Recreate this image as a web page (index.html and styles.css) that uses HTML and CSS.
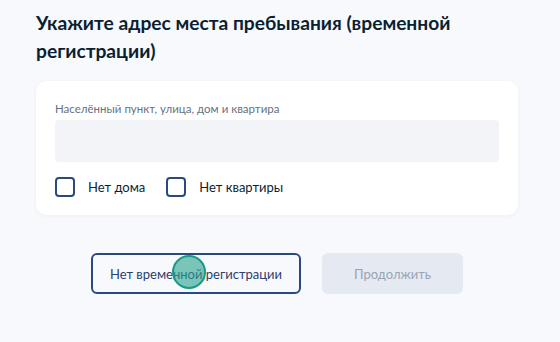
FILE: index.html
```html
<!DOCTYPE html>
<html lang="ru">
<head>
  <meta charset="UTF-8" />
  <meta name="viewport" content="width=device-width, initial-scale=1.0" />
  <title>Адрес места пребывания</title>
  <link rel="stylesheet" href="styles.css">
</head>
<body>
  <div class="page">
    <h2 class="title">Укажите адрес места пребывания (временной регистрации)</h2>

    <div class="card">
      <label class="field-label" for="address">Населённый пункт, улица, дом и квартира</label>
      <input type="text" id="address" class="field-input" />

      <div class="checks">
        <label class="check"><span class="box"></span> Нет дома</label>
        <label class="check"><span class="box"></span> Нет квартиры</label>
      </div>
    </div>

    <div class="actions">
      <button class="btn btn-outline">Нет временной регистрации
        <span class="touch"></span>
      </button>
      <button class="btn btn-disabled" disabled>Продолжить</button>
    </div>
  </div>
</body>
</html>
```

FILE: styles.css
```css
:root {
  --bg: #f8f9fc;
  --text: #0b1f33;
  --muted: #66727f;
  --navy: #2a4a7f;
  --field: #f2f4f8;
}

body {
  margin: 0;
  background: var(--bg);
  font-family: Lato, "Open Sans", sans-serif;
  color: var(--text);
}

.page {
  width: 482px;
  padding: 9px 0 0 36px;
}

.title {
  margin: 0 0 16px;
  font-size: 19.2px;
  line-height: 28px;
  font-weight: 700;
  width: 440px;
}

.card {
  background: #fff;
  border-radius: 10px;
  padding: 20px 19px 18px;
  box-shadow: 0 1px 4px rgba(11, 31, 51, 0.05);
}

.field-label {
  display: block;
  font-size: 11.5px;
  line-height: 16px;
  color: var(--muted);
  margin-bottom: 3px;
}

.field-input {
  display: block;
  width: 100%;
  box-sizing: border-box;
  height: 42px;
  border: none;
  border-radius: 4px;
  background: var(--field);
}

.checks {
  display: flex;
  gap: 21px;
  margin-top: 15px;
}

.check {
  display: flex;
  align-items: center;
  gap: 13px;
  font-size: 13px;
  line-height: 20px;
}

.box {
  width: 20px;
  height: 20px;
  box-sizing: border-box;
  border: 2px solid var(--navy);
  border-radius: 4px;
}

.actions {
  display: flex;
  justify-content: center;
  gap: 21px;
  margin-top: 38px;
}

.btn {
  height: 41px;
  border-radius: 6px;
  font-family: inherit;
  font-size: 13px;
}

.btn-outline {
  position: relative;
  width: 210px;
  background: transparent;
  border: 2px solid var(--navy);
  color: #2c3f6e;
}

.btn-disabled {
  width: 141px;
  border: none;
  background: #e4e9f2;
  color: #9aa4b4;
}

.touch {
  position: absolute;
  left: 79px;
  top: 0;
  width: 30px;
  height: 30px;
  border-radius: 50%;
  background: rgba(38, 160, 140, 0.6);
  border: 2px solid #1a9a84;
}
```
